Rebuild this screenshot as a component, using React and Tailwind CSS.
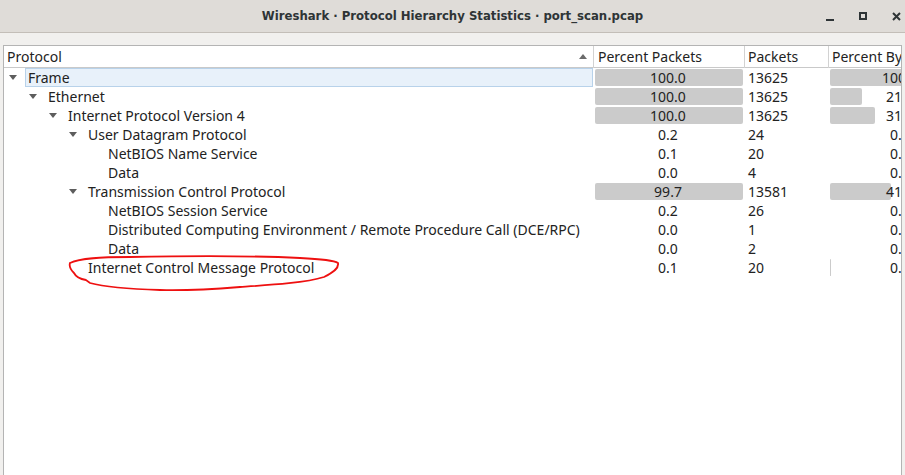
import React from 'react';

const rows = [
  { name: 'Frame', level: 0, open: true, pp: '100.0', ppBar: 100, packets: '13625', pb: '100.0', pbBar: 100, selected: true },
  { name: 'Ethernet', level: 1, open: true, pp: '100.0', ppBar: 100, packets: '13625', pb: '21.6', pbBar: 21.6 },
  { name: 'Internet Protocol Version 4', level: 2, open: true, pp: '100.0', ppBar: 100, packets: '13625', pb: '31.0', pbBar: 31 },
  { name: 'User Datagram Protocol', level: 3, open: true, pp: '0.2', packets: '24', pb: '0.1' },
  { name: 'NetBIOS Name Service', level: 4, pp: '0.1', packets: '20', pb: '0.1' },
  { name: 'Data', level: 4, pp: '0.0', packets: '4', pb: '0.0' },
  { name: 'Transmission Control Protocol', level: 3, open: true, pp: '99.7', ppBar: 99.7, packets: '13581', pb: '41.5', pbBar: 41.5 },
  { name: 'NetBIOS Session Service', level: 4, pp: '0.2', packets: '26', pb: '0.1' },
  { name: 'Distributed Computing Environment / Remote Procedure Call (DCE/RPC)', level: 4, pp: '0.0', packets: '1', pb: '0.0' },
  { name: 'Data', level: 4, pp: '0.0', packets: '2', pb: '0.0' },
  { name: 'Internet Control Message Protocol', level: 3, pp: '0.1', packets: '20', pb: '0.5', pbBar: 0.7 },
];

const DownArrow = () => (
  <svg width="8" height="5" viewBox="0 0 8 5" className="shrink-0">
    <path d="M0 0 L8 0 L4 5 Z" fill="#5d5d5d" />
  </svg>
);

const Bar = ({ value, label, width }) => (
  <div className="relative h-[17px] w-full">
    {value !== undefined && (
      <div
        className="absolute left-[2px] top-0 h-[17px] rounded-[2px] bg-[#cbcbcb]"
        style={{ width: Math.max(1, Math.round((width * value) / 100)) }}
      />
    )}
    <div className="relative whitespace-nowrap text-center leading-[17px]">{label}</div>
  </div>
);

const Row = ({ r }) => (
  <div className="flex h-[19px] items-center">
    <div className="relative flex h-[19px] w-[589px] shrink-0 items-center">
      <div className="flex h-[19px] items-center" style={{ paddingLeft: 5 + r.level * 20 }}>
        <div className="flex w-[16px] items-center">{r.open && <DownArrow />}</div>
      </div>
      <div
        className={
          r.selected
            ? 'flex h-[19px] flex-1 items-center border border-[#b8d2ea] bg-[#e8f1fa] pl-[2px]'
            : 'flex h-[19px] flex-1 items-center pl-[3px]'
        }
      >
        <span className="whitespace-nowrap">{r.name}</span>
      </div>
    </div>
    <div className="w-[151px] shrink-0 pr-[1px]">
      <Bar value={r.ppBar} label={r.pp} width={148} />
    </div>
    <div className="w-[84px] shrink-0 pl-[4px]">{r.packets}</div>
    <div className="w-[144px] shrink-0">
      <Bar value={r.pbBar} label={r.pb} width={146} />
    </div>
  </div>
);

export default function App() {
  return (
    <div
      className="relative flex h-[475px] w-[905px] flex-col overflow-hidden bg-[#f1f0ee] text-[14px] text-[#222222]"
      style={{ fontFamily: '"Noto Sans", "DejaVu Sans", sans-serif' }}
    >
      {/* Title bar */}
      <div className="relative flex h-[33px] shrink-0 items-center justify-center border-b border-[#c3beb8] bg-[#dfdcd8]">
        <span
          className="text-[13px] font-bold text-[#2e3436]"
          style={{ fontFamily: '"DejaVu Sans Condensed", "DejaVu Sans", sans-serif' }}
        >
          Wireshark · Protocol Hierarchy Statistics · port_scan.pcap
        </span>
        <div className="absolute right-[3px] top-0 flex h-[32px] items-center gap-[25px] pr-[1px]">
          <div className="mt-[7px] h-[2px] w-[8px] bg-[#2e3436]" />
          <div className="h-[8px] w-[8px] border-2 border-[#2e3436]" />
          <svg width="9" height="9" viewBox="0 0 9 9">
            <path d="M1 1 L8 8 M8 1 L1 8" stroke="#2e3436" strokeWidth="2" />
          </svg>
        </div>
      </div>

      {/* Tree view */}
      <div className="mx-[3px] mt-[12px] flex flex-1 flex-col overflow-hidden border border-b-0 border-[#b4b4b4] bg-white">
        <div className="flex h-[22px] shrink-0 items-center border-b border-[#c9c9c9]">
          <div className="relative flex h-[22px] w-[589px] shrink-0 items-center pl-[3px]">
            Protocol
            <svg width="8" height="5" viewBox="0 0 8 5" className="absolute right-[6px] top-[8px]">
              <path d="M0 5 L8 5 L4 0 Z" fill="#6b6b6b" />
            </svg>
          </div>
          <div className="flex h-[22px] w-[151px] shrink-0 items-center border-l border-[#d2d2d2] pl-[4px]">
            Percent Packets
          </div>
          <div className="flex h-[22px] w-[84px] shrink-0 items-center border-l border-[#d2d2d2] pl-[3px]">
            Packets
          </div>
          <div className="flex h-[22px] w-[144px] shrink-0 items-center whitespace-nowrap border-l border-[#d2d2d2] pl-[3px]">
            Percent Bytes
          </div>
        </div>
        <div>
          {rows.map((r, i) => (
            <Row key={i} r={r} />
          ))}
        </div>
      </div>

      {/* hand drawn annotation over the list */}
      <svg
        className="pointer-events-none absolute left-0 top-0"
        width="905"
        height="475"
        viewBox="0 0 905 475"
      >
        <path
          d="M70 263 C80 258 100 257 130 257 C180 256 240 255 300 258 C320 259 335 261 338 263 C339 268 334 272 324 277 C305 283 270 285 240 287 C215 289 190 291 160 290 C130 289 105 287 90 283 L86 280 C80 279 76 277 74 273 C71 270 69 266 70 263"
          fill="none"
          stroke="#ee1010"
          strokeWidth="1.8"
          strokeLinecap="round"
        />
      </svg>
    </div>
  );
}
